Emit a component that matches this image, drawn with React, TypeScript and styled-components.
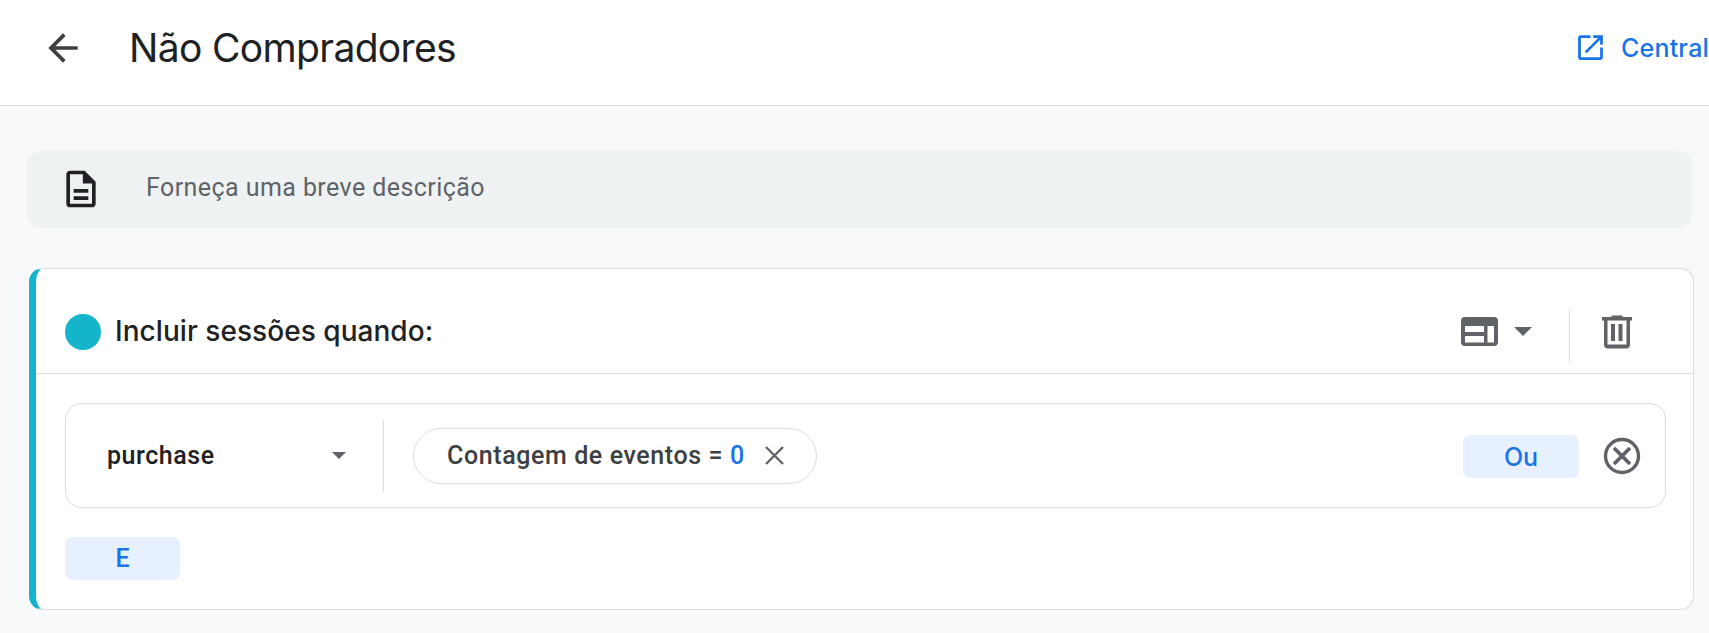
import React from 'react';
import styled, { createGlobalStyle } from 'styled-components';

const GlobalStyle = createGlobalStyle`
  *, *::before, *::after { box-sizing: border-box; }
  html, body { margin: 0; padding: 0; overflow: hidden; background: #f8f9fb; }
  button { border: 0; padding: 0; background: none; font: inherit; color: inherit; }
`;

const heading = "Inter, 'Open Sans', sans-serif";
const body = "Roboto, 'Liberation Sans', sans-serif";
const line = '#dadce0';

const Page = styled.div`
  width: 100%;
  height: 633px;
  overflow: hidden;
  background: #f8f9fb;
  font-family: ${body};
  color: #202124;
`;

const Header = styled.header`
  display: flex;
  align-items: center;
  height: 106px;
  padding: 0 0 9px 41px;
  background: #fff;
  border-bottom: 1px solid ${line};
`;

const Icon = styled.svg<{ $w: number; $h?: number }>`
  display: block;
  flex: none;
  width: ${(p) => p.$w}px;
  height: ${(p) => p.$h ?? p.$w}px;
  fill: currentColor;
`;

const IconButton = styled.button<{ $color?: string }>`
  display: flex;
  align-items: center;
  color: ${(p) => p.$color ?? '#5f6368'};
`;

const Title = styled.h1`
  margin: 0 auto 0 44px;
  font: 400 39px/48px ${heading};
  letter-spacing: -0.65px;
  white-space: nowrap;
`;

const HelpLink = styled.a`
  display: flex;
  align-items: center;
  gap: 14px;
  width: 135px;
  padding-bottom: 1px;
  color: #1a73e8;
  font: 500 25px/32px ${heading};
  letter-spacing: 0.2px;
  white-space: nowrap;
`;

const Description = styled.div`
  display: flex;
  align-items: center;
  gap: 43px;
  height: 77px;
  margin: 45px 17px 0 27px;
  padding: 0 0 1px 32px;
  border-radius: 14px;
  background: #eff2f3;
`;

const Placeholder = styled.span`
  padding-bottom: 2px;
  color: #5f6368;
  font-size: 25px;
  line-height: 32px;
  letter-spacing: 0.43px;
`;

const Card = styled.section`
  height: 342px;
  margin: 40px 15px 0 29px;
  border: 1px solid ${line};
  border-left: 7px solid #14b5cb;
  border-radius: 14px;
  background: #fff;
`;

const CardHeader = styled.div`
  display: flex;
  align-items: center;
  height: 105px;
  padding: 21px 61px 0 29px;
  border-bottom: 1px solid ${line};
`;

const Dot = styled.span`
  width: 36px;
  height: 36px;
  border-radius: 50%;
  background: #14b5cb;
`;

const CardTitle = styled.h2`
  margin: 0 auto 0 14px;
  padding-bottom: 1px;
  font: 500 28px/36px ${heading};
  letter-spacing: 0.05px;
  white-space: nowrap;
`;

const Rule = styled.span<{ $h: number; $drop?: number }>`
  flex: none;
  width: 1px;
  height: ${(p) => p.$h}px;
  margin-top: ${(p) => p.$drop ?? 0}px;
  background: ${line};
`;

const ScopeButton = styled(IconButton)`
  gap: 12px;
  margin-right: 37px;
`;

const DeleteButton = styled(IconButton)`
  margin-left: 32px;
`;

const CardBody = styled.div`
  padding: 29px 27px 0 29px;
`;

const Condition = styled.div`
  display: flex;
  align-items: center;
  height: 105px;
  padding-right: 24px;
  border: 1px solid ${line};
  border-radius: 16px;
`;

const EventSelect = styled.button`
  display: flex;
  align-items: center;
  justify-content: space-between;
  width: 317px;
  padding: 0 37px 0 41px;
  color: #5f6368;
`;

const EventName = styled.span`
  color: #202124;
  font-size: 25px;
  font-weight: 500;
  line-height: 32px;
  letter-spacing: 0.55px;
`;

const Chip = styled.div`
  display: flex;
  align-items: center;
  width: 404px;
  height: 56px;
  margin: 0 auto 0 29px;
  padding: 0 32px 0 33px;
  border: 1px solid ${line};
  border-radius: 28px;
  color: #3c4043;
  font-size: 25px;
  font-weight: 500;
  line-height: 32px;
  letter-spacing: 0.6px;
  white-space: pre;
`;

const Value = styled.span`
  color: #1a73e8;
`;

const ChipClose = styled(IconButton)`
  margin-left: auto;
`;

const LogicButton = styled.button<{ $w: number; $font?: string; $drop?: number }>`
  width: ${(p) => p.$w}px;
  height: 43px;
  margin-top: ${(p) => p.$drop ?? 0}px;
  border-radius: 7px;
  background: #e6f0fe;
  color: #1a73e8;
  font: 500 25px/40px ${(p) => p.$font ?? body};
`;

const RemoveButton = styled(IconButton)`
  margin: 1px 0 0 24px;
`;

const AndRow = styled.div`
  display: flex;
  margin-top: 29px;
`;

export default function App() {
  return (
    <Page>
      <GlobalStyle />
      <Header>
        <IconButton $color="#3c4043" aria-label="Voltar">
          <Icon $w={44} viewBox="0 0 24 24">
            <path d="M20 11H7.83l5.59-5.59L12 4l-8 8 8 8 1.41-1.41L7.83 13H20v-2z" />
          </Icon>
        </IconButton>
        <Title>Não Compradores</Title>
        <HelpLink>
          <Icon $w={33} viewBox="0 0 24 24">
            <path d="M19 19H5V5h7V3H5a2 2 0 0 0-2 2v14a2 2 0 0 0 2 2h14c1.1 0 2-.9 2-2v-7h-2v7zM14 3v2h3.59l-9.83 9.83 1.41 1.41L19 6.41V10h2V3h-7z" />
          </Icon>
          Central
        </HelpLink>
      </Header>

      <Description>
        <Icon $w={44} viewBox="0 0 24 24">
          <path
            fillRule="evenodd"
            d="M14 2H6c-1.1 0-1.99.9-1.99 2L4 20c0 1.1.89 2 1.99 2H18c1.1 0 2-.9 2-2V8l-6-6zM6 20V4h7v5h5v11H6zM8 12h8v2H8zM8 16h8v2H8z"
          />
        </Icon>
        <Placeholder>Forneça uma breve descrição</Placeholder>
      </Description>

      <Card>
        <CardHeader>
          <Dot />
          <CardTitle>Incluir sessões quando:</CardTitle>
          <ScopeButton aria-label="Escopo">
            <Icon $w={37} $h={29} viewBox="0 0 37 29">
              <path
                fillRule="evenodd"
                d="M4 0h29a4 4 0 0 1 4 4v21a4 4 0 0 1-4 4H4a4 4 0 0 1-4-4V4a4 4 0 0 1 4-4zM4 9v6h19V9zM4 19v6.500h19V19zM26.500 9v16.500H33V9z"
              />
            </Icon>
            <Icon $w={22} $h={9} viewBox="0 0 22 9">
              <path d="M4 0h18l-9 9z" />
            </Icon>
          </ScopeButton>
          <Rule $h={54} $drop={8} />
          <DeleteButton aria-label="Excluir">
            <Icon $w={30} $h={34} viewBox="0 0 30 34">
              <path
                fillRule="evenodd"
                d="M9.500 0.500h11V2H30v3.500h-2V29.500a4 4 0 0 1-4 4H6a4 4 0 0 1-4-4V5.500H0V2h9.500zM5.500 5.500v24h19v-24zM9 9h4v17H9zM16.500 9h4v17h-4z"
              />
            </Icon>
          </DeleteButton>
        </CardHeader>

        <CardBody>
          <Condition>
            <EventSelect>
              <EventName>purchase</EventName>
              <Icon $w={14} $h={7} viewBox="0 0 14 7">
                <path d="M0 0h14L7 7z" />
              </Icon>
            </EventSelect>
            <Rule $h={72} />
            <Chip>
              Contagem de eventos = <Value>0</Value>
              <ChipClose aria-label="Remover">
                <Icon $w={19} viewBox="0 0 19 19">
                  <path d="M1 1l17 17M18 1L1 18" stroke="currentColor" strokeWidth="2.400" />
                </Icon>
              </ChipClose>
            </Chip>
            <LogicButton $w={116} $font={heading} $drop={2}>Ou</LogicButton>
            <RemoveButton aria-label="Remover condição">
              <Icon $w={38} viewBox="0 0 38 38">
                <circle cx="19" cy="19" r="16.500" fill="none" stroke="currentColor" strokeWidth="3.400" />
                <path d="M11 11l16 16M27 11L11 27" stroke="currentColor" strokeWidth="3.800" />
              </Icon>
            </RemoveButton>
          </Condition>
          <AndRow>
            <LogicButton $w={115}>E</LogicButton>
          </AndRow>
        </CardBody>
      </Card>
    </Page>
  );
}
